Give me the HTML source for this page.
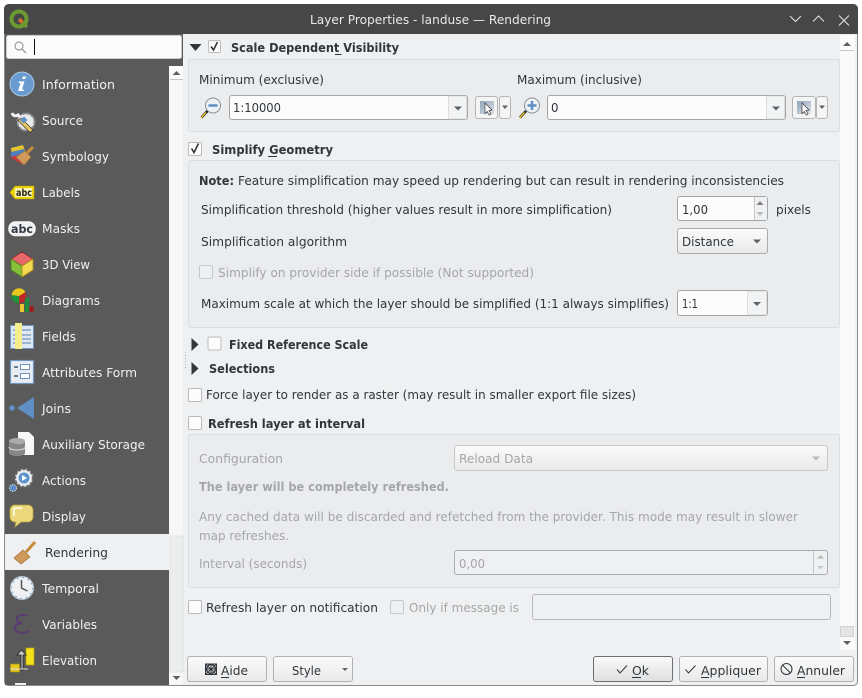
<!DOCTYPE html>
<html><head><meta charset="utf-8"><title>Layer Properties</title>
<style>
html,body{margin:0;padding:0;background:#fff;width:862px;height:698px;overflow:hidden}
svg{display:block}
text{font-family:"DejaVu Sans",sans-serif;font-size:12.5px;fill:#31363b;white-space:pre}
.b{font-weight:bold;font-size:12.5px}
.g{fill:#a4a6a8}
.s{fill:#f0f1f2}
.box{fill:#ebecee;stroke:#dcdddf}
.cb{fill:#fcfcfc;stroke:#b9bbbd}
.f{fill:#fcfcfc;stroke:#a3a5a7}
.btn{fill:#f4f4f5;stroke:#b3b5b7}
.ar{fill:#5f6265}
.ck{fill:none;stroke:#31363b;stroke-width:1.6}
.u{stroke:#31363b;stroke-width:1}
</style></head><body>
<svg width="862" height="698" viewBox="0 0 862 698" xmlns="http://www.w3.org/2000/svg">
<defs>
<linearGradient id="bg" x1="0" y1="0" x2="0" y2="1"><stop offset="0" stop-color="#fbfbfb"/><stop offset="1" stop-color="#e8e9ea"/></linearGradient>
<linearGradient id="dark" x1="0" y1="0" x2="0" y2="1"><stop offset="0" stop-color="#fafafa"/><stop offset="1" stop-color="#dedfe0"/></linearGradient>
<linearGradient id="pick" x1="0" y1="0" x2="1" y2="1"><stop offset="0" stop-color="#8fa3b8"/><stop offset="1" stop-color="#dfe3e8"/></linearGradient>
</defs>
<!-- window -->
<rect x="4.5" y="4.5" width="853" height="681" rx="4" fill="#eff0f1" stroke="#8a8b8c"/>
<path d="M4 34V9a5 5 0 0 1 5-5H853a5 5 0 0 1 5 5V34Z" fill="#474747"/>
<!-- QGIS logo -->
<circle cx="19" cy="19" r="7.500" fill="none" stroke="#6b9a2f" stroke-width="4"/>
<path d="M19 19l8 8" stroke="#6b9a2f" stroke-width="3.500"/>
<circle cx="21" cy="21" r="2.200" fill="#e0662a"/>
<text x="310" y="24" textLength="241" lengthAdjust="spacingAndGlyphs" style="fill:#e9eaeb">Layer Properties - landuse — Rendering</text>
<path d="M790 16l5.500 5.500 5.500-5.500M813 21.500l5.500-5.500 5.500 5.500M839 15.500l10 10M849 15.500l-10 10" fill="none" stroke="#e6e7e8" stroke-width="1"/>

<!-- search -->
<rect x="5" y="34" width="178" height="32" fill="#5a5a5a"/>
<rect x="6.500" y="35.500" width="175" height="23" rx="2" fill="#fcfcfc" stroke="#c9cacb"/>
<circle cx="19" cy="46" r="4" fill="none" stroke="#9a9c9e" stroke-width="1.200"/><path d="M22 49l4 4" stroke="#9a9c9e" stroke-width="1.400"/>
<rect x="34" y="39" width="1" height="16" fill="#111"/>
<rect x="183" y="34" width="674" height="2" fill="#eff0f1"/>

<!-- sidebar -->
<rect x="5" y="59" width="164" height="626" fill="#5a5a5a"/>
<rect x="5" y="534" width="164" height="36" fill="#eff0f1"/>
<rect x="169" y="66" width="14" height="619" fill="#f7f7f8"/>
<rect x="170" y="66" width="13" height="14" fill="#fcfcfc"/>
<path d="M170 79.500h13" stroke="#c4c5c6"/>
<path d="M172.500 75l4-4 4 4Z" class="ar"/>
<rect x="170" y="536" width="13" height="136" fill="#eceded" stroke="#d8d9da" stroke-width=".6"/>
<path d="M172.500 676l4 4 4-4Z" class="ar"/>

<text x="42" y="89" class="s" textLength="73" lengthAdjust="spacingAndGlyphs">Information</text>
<text x="42" y="125" class="s" textLength="41" lengthAdjust="spacingAndGlyphs">Source</text>
<text x="42" y="161" class="s" textLength="67" lengthAdjust="spacingAndGlyphs">Symbology</text>
<text x="42" y="197" class="s" textLength="38" lengthAdjust="spacingAndGlyphs">Labels</text>
<text x="42" y="233" class="s" textLength="38" lengthAdjust="spacingAndGlyphs">Masks</text>
<text x="42" y="269" class="s" textLength="48" lengthAdjust="spacingAndGlyphs">3D View</text>
<text x="42" y="305" class="s" textLength="58" lengthAdjust="spacingAndGlyphs">Diagrams</text>
<text x="42" y="341" class="s" textLength="34" lengthAdjust="spacingAndGlyphs">Fields</text>
<text x="42" y="377" class="s" textLength="95" lengthAdjust="spacingAndGlyphs">Attributes Form</text>
<text x="42" y="413" class="s" textLength="29" lengthAdjust="spacingAndGlyphs">Joins</text>
<text x="42" y="449" class="s" textLength="103" lengthAdjust="spacingAndGlyphs">Auxiliary Storage</text>
<text x="42" y="485" class="s" textLength="44" lengthAdjust="spacingAndGlyphs">Actions</text>
<text x="42" y="521" class="s" textLength="44" lengthAdjust="spacingAndGlyphs">Display</text>
<text x="45" y="557" textLength="63" lengthAdjust="spacingAndGlyphs">Rendering</text>
<text x="42" y="593" class="s" textLength="57" lengthAdjust="spacingAndGlyphs">Temporal</text>
<text x="42" y="629" class="s" textLength="55" lengthAdjust="spacingAndGlyphs">Variables</text>
<text x="42" y="665" class="s" textLength="55" lengthAdjust="spacingAndGlyphs">Elevation</text>

<!-- Information icon -->
<circle cx="22" cy="84" r="12" fill="#6a9bd0" stroke="#a9c6e6"/>
<path d="M23 76.500h3l-.8 2.500h-3ZM19 81.500h5.500l-2.500 8h2l-.5 1.500h-5.500l2.500-8h-2Z" fill="#fff"/>
<!-- Source -->
<circle cx="26" cy="122" r="8.500" fill="#e9eaec" stroke="#8a8c8e" stroke-width="2" stroke-dasharray="3 1.500"/>
<path d="M12 113c1 3 4 3.500 6 2l5 5" fill="none" stroke="#f2f2f2" stroke-width="3"/>
<path d="M21 118l12 12-3 2.500-12-12Z" fill="#e8c75a" stroke="#333" stroke-width=".7"/>
<path d="M20 120l4-3.500 3.500 3.500-4 3.500Z" fill="#5f8fc4"/>
<!-- Symbology -->
<path d="M11 148l12-3 3 9-14 3Z" fill="#e2c530"/><path d="M11 152l13-3 2 5-15 3Z" fill="#4f7fc0"/><path d="M10 157l12-3 3 7-4 3Z" fill="#c8383a"/>
<path d="M25 155l8-8" stroke="#c98f3c" stroke-width="3"/><path d="M16 157l9-6 6 6-7 8Z" fill="#cf9a5c" stroke="#a87638" stroke-width=".6"/>
<!-- Labels -->
<path d="M15 186h19v13H15l-5-6.500Z" fill="#f0d400" stroke="#b79e10" stroke-width=".6"/>
<rect x="15" y="188" width="17" height="9" fill="#fdf6b0"/>
<text x="16" y="196" textLength="16" lengthAdjust="spacingAndGlyphs" style="font-size:10px;font-weight:bold;fill:#222">abc</text>
<!-- Masks -->
<rect x="9" y="222" width="26" height="13.500" rx="6.500" fill="#f0f1f2" stroke="#f4f5f6" stroke-width="1.500"/>
<text x="11" y="233" textLength="22" lengthAdjust="spacingAndGlyphs" style="font-size:11.500px;font-weight:bold;fill:#333a44">abc</text>
<!-- 3D -->
<path d="M22 252l11 7-11 7-11-7Z" fill="#e8686a" stroke="#8d2a2a" stroke-width=".8"/>
<path d="M11 259l11 7v11l-11-7Z" fill="#86c03a" stroke="#4d7a1d" stroke-width=".8"/>
<path d="M33 259l-11 7v11l11-7Z" fill="#f2d94e" stroke="#a8901a" stroke-width=".8"/>
<!-- Diagrams -->
<circle cx="19" cy="296" r="7.500" fill="#c0282a" stroke="#444" stroke-width=".5"/>
<path d="M19 296l-7.500 0a7.500 7.500 0 0 1 14-4Z" fill="#e8c81e"/><path d="M19 296l-7.500-1a7.500 7.500 0 0 0 7.500 8.500Z" fill="#20943a"/>
<rect x="20" y="304" width="4" height="8" fill="#ecc832"/><rect x="25" y="298" width="4" height="14" fill="#1e8a3a"/><rect x="29.500" y="306" width="4" height="6" fill="#a01c1c"/>
<!-- Fields -->
<rect x="10.500" y="325.500" width="23" height="23" fill="#dfe8f2" stroke="#6e94bf"/>
<path d="M13 330h18M13 335h18M13 339h18M13 343h18" stroke="#6e94bf" stroke-width="1.200"/>
<rect x="15" y="323" width="7" height="26" fill="#f6ee8c"/>
<!-- Attributes -->
<rect x="10.500" y="360.500" width="23" height="23" fill="#e8edf3" stroke="#6e94bf" stroke-width="1.200"/>
<path d="M14 367h4M14 376h4" stroke="#456" stroke-width="1.500"/><rect x="20.500" y="364.500" width="9" height="5" fill="#fff" stroke="#6e94bf"/><rect x="20.500" y="373.500" width="9" height="5" fill="#fff" stroke="#6e94bf"/>
<!-- Joins -->
<circle cx="12" cy="408" r="2.800" fill="#5f90c8"/><path d="M34 397v22L17 408Z" fill="#5f8fc4"/>
<!-- Aux -->
<path d="M18 432h11l5 5v18H18Z" fill="#f8f8f8"/>
<ellipse cx="17" cy="441" rx="8" ry="3" fill="#aaa"/><path d="M9 441v12c0 4 16 4 16 0v-12c0 4-16 4-16 0Z" fill="#878787"/><path d="M9 447c0 4 16 4 16 0" fill="none" stroke="#ddd"/>
<!-- Actions -->
<circle cx="24" cy="478" r="9" fill="#e9ecf0" stroke="#666" stroke-width="2.200" stroke-dasharray="3 1.500"/>
<circle cx="24" cy="478" r="5.500" fill="#5d93cf"/><path d="M22 475l5 3-5 3Z" fill="#fff"/>
<circle cx="13" cy="488" r="3.500" fill="#5d8ec8" stroke="#d5d8dc" stroke-dasharray="1.500 1"/>
<!-- Display -->
<path d="M14 505h14a5 5 0 0 1 5 5v7a5 5 0 0 1-5 5h-7l-6 5 1-5h-2a5 5 0 0 1-4-5v-7a5 5 0 0 1 4-5Z" fill="#ecd97c" stroke="#b7a440" stroke-width=".8"/>
<path d="M14 508h8M14 508v8" stroke="#fdf8d8" stroke-width="2"/>
<!-- Rendering -->
<path d="M26 552l9-10" stroke="#c68a3d" stroke-width="3"/>
<path d="M14 558l9-8 7 7-9 7Z" fill="#cf9a5c" stroke="#9f7338" stroke-width=".7"/>
<!-- Temporal -->
<circle cx="22" cy="588" r="11.500" fill="#eef0f2" stroke="#b7c7d8"/>
<circle cx="22" cy="588" r="10.500" fill="none" stroke="#6d93bd" stroke-dasharray="1.500 4"/>
<path d="M21.500 580v8l6 3" fill="none" stroke="#555" stroke-width="1.500"/>
<!-- Variables -->
<path d="M27 616c-4-2-10-1-10 3 0 2 2 4 5 4-4 0-7 2-7 5 0 5 8 6 14 3" fill="none" stroke="#5b3a74" stroke-width="2"/>
<!-- Elevation -->
<rect x="26" y="648" width="8" height="17" fill="#f5e11a" stroke="#b59e10" stroke-width=".7"/>
<rect x="10.500" y="664" width="9" height="8" fill="#e8c81e" stroke="#a58e10" stroke-width=".7"/>
<path d="M21 670v-15h-4l4.500-5 4.500 5h-3v15Z" fill="#c9c9c9" stroke="#222" stroke-width=".8"/>
<path d="M10 669h18" stroke="#ddd"/>
<rect x="15" y="683" width="11" height="2" fill="#eee"/>

<!-- main scrollbar -->
<rect x="840" y="35" width="15" height="615" fill="#fafafa"/>
<rect x="840" y="36" width="14" height="14" fill="#fcfcfc"/><path d="M840 50.500h14" stroke="#c6c7c8"/>
<path d="M843 46l4-4 4 4Z" class="ar"/>
<rect x="840.500" y="626.500" width="13" height="10" fill="#e3e4e5" stroke="#d0d1d2"/>
<path d="M843 641l4 4 4-4Z" class="ar"/>

<!-- Scale group -->
<path d="M189.500 44h12l-6 7Z" fill="#31363b"/>
<rect x="208.500" y="40.500" width="12" height="12" rx="1.500" class="cb"/>
<path d="M211 46.500l2.500 3.500 4-8" class="ck"/>
<text x="231" y="52" class="b" textLength="168" lengthAdjust="spacingAndGlyphs">Scale Dependent Visibility</text>
<path d="M335 54.500h6.500" class="u"/>
<rect x="188.500" y="59.500" width="651" height="72" rx="2" class="box"/>
<text x="199" y="84" textLength="125" lengthAdjust="spacingAndGlyphs">Minimum (exclusive)</text>
<text x="517" y="84" textLength="125" lengthAdjust="spacingAndGlyphs">Maximum (inclusive)</text>

<circle cx="213" cy="105.500" r="7.500" fill="#eef1f4" stroke="#8a8d90"/><path d="M208.500 105.500h9" stroke="#5f8fc4" stroke-width="2.500"/>
<path d="M207.500 111l-6 6.500" stroke="#222" stroke-width="2.600"/><path d="M206 112.500l-5 5.500" stroke="#e8c030" stroke-width="1.400"/>
<rect x="229.500" y="95.500" width="238" height="24" rx="2.500" class="f"/>
<path d="M448.500 96h18v23h-18Z" fill="#f2f3f4" stroke="#c4c5c6" stroke-width=".5"/>
<path d="M454 106.500h8l-4 4Z" class="ar"/>
<text x="233" y="112" textLength="48" lengthAdjust="spacingAndGlyphs">1:10000</text>
<rect x="475.500" y="96.500" width="22" height="22" rx="2.500" class="btn"/>
<rect x="480" y="101" width="14" height="13" fill="url(#pick)"/>
<path d="M485 103l7 7-3 .5 2 3.500-1.800 1-2-3.500-2.200 2Z" fill="#fff" stroke="#333" stroke-width=".7"/>
<rect x="499.500" y="96.500" width="11" height="22" rx="2.500" class="btn"/><path d="M502 105.500h6l-3 3.500Z" class="ar"/>

<circle cx="532" cy="105.500" r="7.500" fill="#eef1f4" stroke="#8a8d90"/><path d="M527.500 105.500h9M532 101v9" stroke="#5f8fc4" stroke-width="2.500"/>
<path d="M526 111l-6 6.500" stroke="#222" stroke-width="2.600"/><path d="M524.500 112.500l-5 5.500" stroke="#e8c030" stroke-width="1.400"/>
<rect x="547.500" y="95.500" width="238" height="24" rx="2.500" class="f"/>
<path d="M766.500 96h18v23h-18Z" fill="#f2f3f4" stroke="#c4c5c6" stroke-width=".5"/>
<path d="M772 106.500h8l-4 4Z" class="ar"/>
<text x="551" y="112" textLength="7.500" lengthAdjust="spacingAndGlyphs">0</text>
<rect x="792.500" y="96.500" width="23" height="22" rx="2.500" class="btn"/>
<rect x="797" y="101" width="14" height="13" fill="url(#pick)"/>
<path d="M802 103l7 7-3 .5 2 3.500-1.800 1-2-3.500-2.200 2Z" fill="#fff" stroke="#333" stroke-width=".7"/>
<rect x="816.500" y="96.500" width="11" height="22" rx="2.500" class="btn"/><path d="M819 105.500h6l-3 3.500Z" class="ar"/>

<!-- Simplify -->
<rect x="188.500" y="142.500" width="13" height="13" rx="1.500" class="cb"/>
<path d="M191.500 148.500l2.500 4 4.500-9" class="ck"/>
<text x="212" y="154" class="b" textLength="121" lengthAdjust="spacingAndGlyphs">Simplify Geometry</text>
<path d="M268 156.500h9" class="u"/>
<rect x="188.500" y="160.500" width="651" height="167" rx="2" class="box"/>
<text x="199" y="185" class="b" textLength="35" lengthAdjust="spacingAndGlyphs">Note:</text>
<text x="238" y="185" textLength="546" lengthAdjust="spacingAndGlyphs">Feature simplification may speed up rendering but can result in rendering inconsistencies</text>
<text x="201" y="214" textLength="411" lengthAdjust="spacingAndGlyphs">Simplification threshold (higher values result in more simplification)</text>
<rect x="677.500" y="196.500" width="90" height="24" rx="2.500" class="f"/>
<path d="M754 197h13v23h-13Z" fill="#f0f1f2"/>
<path d="M754.500 197v23" stroke="#c4c5c6"/>
<path d="M756.500 205l3.500-4 3.500 4Z" fill="#7c7e80"/><path d="M756.500 212l3.500 4 3.500-4Z" fill="#b9bbbd"/>
<text x="682" y="214" textLength="26" lengthAdjust="spacingAndGlyphs">1,00</text>
<text x="776" y="214" textLength="35" lengthAdjust="spacingAndGlyphs">pixels</text>
<text x="201" y="246" textLength="146" lengthAdjust="spacingAndGlyphs">Simplification algorithm</text>
<rect x="677.500" y="228.500" width="90" height="25" rx="2.500" fill="url(#bg)" stroke="#a9abad"/>
<text x="682" y="246" textLength="52" lengthAdjust="spacingAndGlyphs">Distance</text>
<path d="M753 239.500h8l-4 4Z" class="ar"/>
<rect x="199.500" y="265.500" width="13" height="13" rx="1.500" fill="#eff0f1" stroke="#c6c8ca"/>
<text x="218" y="277" class="g" textLength="316" lengthAdjust="spacingAndGlyphs">Simplify on provider side if possible (Not supported)</text>
<text x="201" y="308" textLength="468" lengthAdjust="spacingAndGlyphs">Maximum scale at which the layer should be simplified (1:1 always simplifies)</text>
<rect x="677.500" y="290.500" width="90" height="25" rx="2.500" class="f"/>
<path d="M747.500 291h19v24h-19Z" fill="#f2f3f4" stroke="#c4c5c6" stroke-width=".5"/>
<path d="M753 302h8l-4 4Z" class="ar"/>
<text x="682" y="308" textLength="16" lengthAdjust="spacingAndGlyphs">1:1</text>

<!-- splitter -->
<path d="M185.500 352v17" stroke="#a8a9aa" stroke-dasharray="1 2"/>

<!-- collapsed -->
<path d="M191.500 338v13l7-6.500Z" fill="#31363b"/>
<rect x="208" y="337" width="13" height="13" rx="1.500" class="cb"/>
<text x="229" y="349" class="b" textLength="139" lengthAdjust="spacingAndGlyphs">Fixed Reference Scale</text>
<path d="M191.500 362v13l7-6.500Z" fill="#31363b"/>
<text x="209" y="373" class="b" textLength="66" lengthAdjust="spacingAndGlyphs">Selections</text>
<rect x="188.500" y="388.500" width="13" height="13" rx="1.500" class="cb"/>
<text x="206" y="399" textLength="430" lengthAdjust="spacingAndGlyphs">Force layer to render as a raster (may result in smaller export file sizes)</text>
<rect x="188.500" y="416.500" width="13" height="13" rx="1.500" class="cb"/>
<text x="208" y="428" class="b" textLength="157" lengthAdjust="spacingAndGlyphs">Refresh layer at interval</text>

<!-- refresh group -->
<rect x="188.500" y="434.500" width="651" height="153" rx="2" class="box"/>
<text x="199" y="463" class="g" textLength="84" lengthAdjust="spacingAndGlyphs">Configuration</text>
<rect x="454.500" y="445.500" width="373" height="25" rx="2.500" fill="url(#bg)" stroke="#c6c8ca"/>
<text x="459" y="463" class="g" textLength="74" lengthAdjust="spacingAndGlyphs">Reload Data</text>
<path d="M812 456.500h8l-4 4Z" fill="#b7b9bb"/>
<text x="199" y="491" class="b g" textLength="250" lengthAdjust="spacingAndGlyphs">The layer will be completely refreshed.</text>
<text x="199" y="521" class="g" textLength="599" lengthAdjust="spacingAndGlyphs">Any cached data will be discarded and refetched from the provider. This mode may result in slower</text>
<text x="199" y="540" class="g" textLength="90" lengthAdjust="spacingAndGlyphs">map refreshes.</text>
<text x="199" y="568" class="g" textLength="108" lengthAdjust="spacingAndGlyphs">Interval (seconds)</text>
<rect x="454.500" y="550.500" width="373" height="24" rx="2.500" fill="#eff0f1" stroke="#a9abad"/>
<path d="M813.500 551v23" stroke="#c4c5c6"/>
<path d="M817 558.500l3.500-3.500 3.500 3.500Z" fill="#b9bbbd"/><path d="M817 566l3.500 3.500 3.500-3.500Z" fill="#c9cbcd"/>
<text x="459" y="568" class="g" textLength="26" lengthAdjust="spacingAndGlyphs">0,00</text>

<rect x="188.500" y="600.500" width="13" height="13" rx="1.500" class="cb"/>
<text x="206" y="612" textLength="172" lengthAdjust="spacingAndGlyphs">Refresh layer on notification</text>
<rect x="390.500" y="600.500" width="13" height="13" rx="1.500" fill="#eff0f1" stroke="#c6c8ca"/>
<text x="409" y="612" class="g" textLength="110" lengthAdjust="spacingAndGlyphs">Only if message is</text>
<rect x="532.500" y="594.500" width="298" height="25" rx="2.500" fill="#eff0f1" stroke="#b5b7b9"/>

<!-- bottom buttons -->
<rect x="187.500" y="656.500" width="79" height="25" rx="2.500" fill="url(#bg)" stroke="#b0b2b4"/>
<circle cx="211" cy="669" r="4.500" fill="#e8e8e8" stroke="#31363b" stroke-width="1.400"/>
<path d="M205.500 664h11v10.500h-11Z" fill="none" stroke="#31363b" stroke-width="1"/>
<path d="M206 664.500l10 9.500M216 664.500l-10 9.500M211 664v10.500M205.500 669h11" stroke="#31363b" stroke-width="1"/>
<text x="221" y="675" textLength="27" lengthAdjust="spacingAndGlyphs">Aide</text>
<path d="M221 677.500h8" class="u"/>
<rect x="273.500" y="656.500" width="79" height="25" rx="2.500" fill="url(#bg)" stroke="#b0b2b4"/>
<text x="292" y="675" textLength="29" lengthAdjust="spacingAndGlyphs">Style</text>
<path d="M342 668h6l-3 3Z" class="ar"/>
<rect x="593.500" y="656.500" width="79" height="25" rx="2.500" fill="url(#dark)" stroke="#6c6e70"/>
<path d="M617 669.500l3 3.500 7-7.500" fill="none" stroke="#31363b"/>
<text x="632" y="675" textLength="17" lengthAdjust="spacingAndGlyphs">Ok</text>
<path d="M632 677.500h9" class="u"/>
<rect x="679.500" y="656.500" width="88" height="25" rx="2.500" fill="url(#bg)" stroke="#b0b2b4"/>
<path d="M685.500 669.500l3 3.500 7-7.500" fill="none" stroke="#31363b"/>
<text x="701" y="675" textLength="60" lengthAdjust="spacingAndGlyphs">Appliquer</text>
<path d="M701 677.500h8" class="u"/>
<rect x="774.500" y="656.500" width="79" height="25" rx="2.500" fill="url(#bg)" stroke="#b0b2b4"/>
<circle cx="786.500" cy="669" r="5.500" fill="none" stroke="#31363b"/><path d="M782.500 665l8 8" stroke="#31363b"/>
<text x="797" y="675" textLength="48" lengthAdjust="spacingAndGlyphs">Annuler</text>
<path d="M797 677.500h8" class="u"/>
</svg>
</body></html>
